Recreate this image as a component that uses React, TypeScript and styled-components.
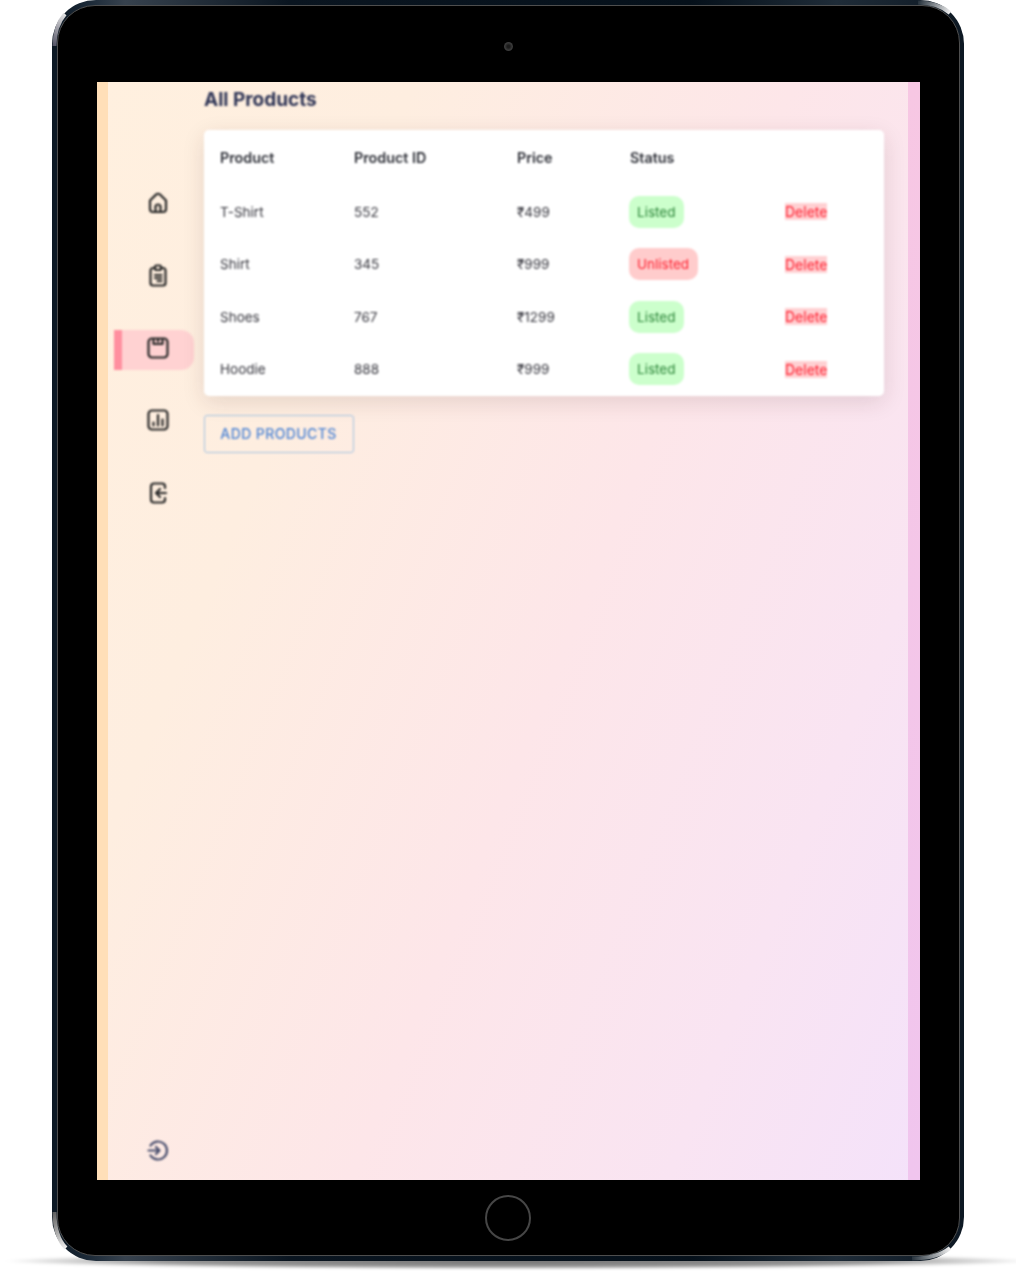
import React from 'react';
import styled, { createGlobalStyle } from 'styled-components';

const GlobalStyle = createGlobalStyle`
  html, body {
    margin: 0;
    padding: 0;
    background: #fff;
    font-family: Inter, "Liberation Sans", sans-serif;
  }
`;

const Page = styled.div`
  position: relative;
  width: 1016px;
  height: 1271px;
  padding-left: 52px;
  box-sizing: border-box;
  overflow: hidden;
`;

const GroundShadow = styled.div`
  position: absolute;
  left: 4px;
  right: -16px;
  top: 1253px;
  height: 16px;
  background: radial-gradient(ellipse 50% 50% at center, rgba(0, 0, 0, 0.55) 0%, rgba(0, 0, 0, 0.42) 70%, rgba(0, 0, 0, 0.12) 92%, rgba(0, 0, 0, 0) 100%);
  filter: blur(1.5px);
`;

const Device = styled.div`
  position: relative;
  width: 912px;
  height: 1261px;
  box-sizing: border-box;
  padding: 5px 4.5px 5.5px 5px;
  border-radius: 44px;
  background: linear-gradient(90deg, #0b1722 0%, #1c2a38 4%, #37424e 8%, #0a1520 26%, #05101a 70%, #1f2c38 86%, #0d1823 100%);
`;

const Glints = styled.svg`
  position: absolute;
  left: 0;
  top: 0;
  pointer-events: none;
`;

const Bezel = styled.div`
  height: 100%;
  box-sizing: border-box;
  display: flex;
  flex-direction: column;
  border: 1.5px solid #4e4e4e;
  border-radius: 38px;
  background: #000;
  padding: 0 38.5px;
`;

const TopBar = styled.div`
  height: 75.5px;
  flex: none;
  display: flex;
  align-items: center;
  justify-content: center;
  padding-top: 6px;
  box-sizing: border-box;
`;

const Camera = styled.div`
  width: 9px;
  height: 9px;
  border-radius: 50%;
  background: radial-gradient(circle, #1a1a1a 20%, #3c3c3c 60%, #2a2a2a 100%);
`;

const BottomBar = styled.div`
  flex: 1;
  display: flex;
  align-items: center;
  justify-content: center;
  padding-top: 1px;
  box-sizing: border-box;
`;

const HomeButton = styled.div`
  width: 46px;
  height: 46px;
  box-sizing: border-box;
  border-radius: 50%;
  border: 2px solid #464646;
`;

const Screen = styled.div`
  width: 823px;
  height: 1098px;
  flex: none;
  display: flex;
  background: linear-gradient(112deg, #fff0df 0%, #feeee0 25%, #fde6e9 55%, #f9e4f2 80%, #f4e2fa 100%);
`;

const Strip = styled.div<{ $side: 'left' | 'right' }>`
  flex: none;
  width: ${props => (props.$side === 'left' ? '11px' : '12px')};
  background: ${props =>
    props.$side === 'left' ? '#ffdfb8' : 'linear-gradient(180deg, #f7c7e3 0%, #f0c5ee 100%)'};
`;

const Sidebar = styled.nav`
  flex: none;
  width: 96px;
  box-sizing: border-box;
  padding: 103px 10px 18px 6px;
  display: flex;
  flex-direction: column;
  gap: 32.5px;
  filter: blur(0.8px);
`;

const NavItem = styled.div<{ $active?: boolean }>`
  height: 40px;
  box-sizing: border-box;
  display: flex;
  justify-content: center;
  padding-top: 6px;
  border-left: 8px solid ${props => (props.$active ? '#ff8f9f' : 'transparent')};
  border-radius: 0 13px 13px 0;
  background: ${props => (props.$active ? '#ffd2d2' : 'transparent')};
`;

const FooterItem = styled.div`
  margin-top: auto;
  padding-left: 8px;
  display: flex;
  justify-content: center;
`;

const Icon = styled.svg<{ $color?: string }>`
  width: 24px;
  height: 24px;
  fill: none;
  stroke: ${props => props.$color || '#262626'};
  stroke-width: 2.2;
  stroke-linecap: round;
  stroke-linejoin: round;
`;

const Main = styled.main`
  flex: 1;
  min-width: 0;
  padding-right: 24px;
  filter: blur(0.8px);
`;

const Title = styled.h1`
  margin: 6px 0 18px;
  padding-left: 0.5px;
  font-size: 19px;
  line-height: 24px;
  font-weight: 700;
  color: #2f3556;
`;

const Card = styled.div`
  width: 680px;
  background: #fff;
  border-radius: 5px;
  box-shadow: 0 6px 22px rgba(60, 30, 30, 0.13);
`;

const Table = styled.table`
  width: 100%;
  table-layout: fixed;
  border-collapse: collapse;
  font-size: 13.5px;
`;

const HeadCell = styled.th<{ $width: number }>`
  width: ${props => props.$width}px;
  height: 56px;
  box-sizing: border-box;
  padding: 0 16px 0 16.5px;
  text-align: left;
  font-size: 14.3px;
  font-weight: 600;
  color: #2c2e36;
`;

const Row = styled.tr`
  height: 52.5px;
`;

const Cell = styled.td`
  padding: 0 16px 0 16.5px;
  color: #33333b;
`;

const StatusPill = styled.span<{ $listed: boolean }>`
  display: inline-block;
  margin-left: -1.5px;
  padding: 7px 8.5px;
  line-height: 18px;
  border-radius: 10px;
  background: ${props => (props.$listed ? '#ccffcc' : '#ffcccc')};
  color: ${props => (props.$listed ? '#2b8538' : '#ff1c2c')};
`;

const DeleteLink = styled.span`
  font-size: 14px;
  background: #ffd0d2;
  color: #ff1c2c;
`;

const AddButton = styled.button`
  display: block;
  margin-top: 19.5px;
  width: 150px;
  height: 38px;
  padding: 0 0 2px;
  border: 1.5px solid #a4c3e2;
  border-radius: 3px;
  background: transparent;
  font-family: inherit;
  font-size: 14px;
  font-weight: 500;
  color: #4a82d4;
  letter-spacing: 0.4px;
`;

const HomeIcon = () => (
  <Icon viewBox="0 0 24 24">
    <path d="M4 9.500 10 3.600a2.800 2.800 0 0 1 4 0l6 5.900V18a3 3 0 0 1-3 3H7a3 3 0 0 1-3-3z" />
    <path d="M9.500 20.500V16a2.500 2.500 0 0 1 5 0v4.500" />
  </Icon>
);

const ClipboardIcon = () => (
  <Icon viewBox="0 0 24 24">
    <path d="M8.500 5H7a2.500 2.500 0 0 0-2.500 2.500V20A2.500 2.500 0 0 0 7 22.500h10a2.500 2.500 0 0 0 2.500-2.500V7.500A2.500 2.500 0 0 0 17 5h-1.500" />
    <rect x="9" y="2.500" width="6" height="4.500" rx="1.500" />
    <path d="M9 12h6.500M9 15h6.500M11.500 18h4" />
  </Icon>
);

const BoxIcon = () => (
  <Icon viewBox="0 0 24 24">
    <rect x="2.500" y="2.500" width="19" height="19" rx="3.500" />
    <path d="M7.500 3v5h9V3" />
    <path d="M12 3v2.500" />
  </Icon>
);

const ChartIcon = () => (
  <Icon viewBox="0 0 24 24">
    <rect x="2.500" y="2.500" width="19" height="19" rx="3.500" />
    <path d="M7.500 14.500v3M12 7v10.500M16.500 11.500v6" />
  </Icon>
);

const LogoutIcon = () => (
  <Icon viewBox="0 0 24 24">
    <path d="M19 7V5.500A3 3 0 0 0 16 2.500H8A3 3 0 0 0 5 5.500v13a3 3 0 0 0 3 3h8a3 3 0 0 0 3-3V17" />
    <path d="M20 12h-9M14 8l-4 4 4 4" />
  </Icon>
);

const LoginIcon = () => (
  <Icon viewBox="0 0 24 24" $color="#454b6b">
    <path d="M4.500 7.500a9 9 0 1 1 0 10" />
    <path d="M2.500 12.500h11M10 9l3.500 3.500L10 16" />
  </Icon>
);

const products = [
  { name: 'T-Shirt', id: 552, price: '₹499', listed: true },
  { name: 'Shirt', id: 345, price: '₹999', listed: false },
  { name: 'Shoes', id: 767, price: '₹1299', listed: true },
  { name: 'Hoodie', id: 888, price: '₹999', listed: true },
];

const navIcons = [HomeIcon, ClipboardIcon, BoxIcon, ChartIcon, LogoutIcon];

const App: React.FC = () => {
  return (
    <Page>
      <GlobalStyle />
      <GroundShadow />
      <Device>
        <Bezel>
          <TopBar>
            <Camera />
          </TopBar>
          <Screen>
            <Strip $side="left" />
            <Sidebar>
              {navIcons.map((NavIcon, i) => (
                <NavItem key={i} $active={i === 2}>
                  <NavIcon />
                </NavItem>
              ))}
              <FooterItem>
                <LoginIcon />
              </FooterItem>
            </Sidebar>
            <Main>
              <Title>All Products</Title>
              <Card>
                <Table>
                  <thead>
                    <tr>
                      <HeadCell $width={134}>Product</HeadCell>
                      <HeadCell $width={163}>Product ID</HeadCell>
                      <HeadCell $width={113}>Price</HeadCell>
                      <HeadCell $width={155}>Status</HeadCell>
                      <HeadCell $width={115} />
                    </tr>
                  </thead>
                  <tbody>
                    {products.map((p) => (
                      <Row key={p.name}>
                        <Cell>{p.name}</Cell>
                        <Cell>{p.id}</Cell>
                        <Cell>{p.price}</Cell>
                        <Cell>
                          <StatusPill $listed={p.listed}>{p.listed ? 'Listed' : 'Unlisted'}</StatusPill>
                        </Cell>
                        <Cell>
                          <DeleteLink>Delete</DeleteLink>
                        </Cell>
                      </Row>
                    ))}
                  </tbody>
                </Table>
              </Card>
              <AddButton>ADD PRODUCTS</AddButton>
            </Main>
            <Strip $side="right" />
          </Screen>
          <BottomBar>
            <HomeButton />
          </BottomBar>
        </Bezel>
        {/* corner highlights of the metal frame */}
        <Glints width="912" height="1261" viewBox="0 0 912 1261" fill="none">
          <defs>
            <linearGradient id="glintTL" x1="0" y1="45" x2="13" y2="13" gradientUnits="userSpaceOnUse">
              <stop offset="0" stopColor="#556" />
              <stop offset="1" stopColor="#e8e8e8" />
            </linearGradient>
            <linearGradient id="glintBL" x1="0" y1="1210" x2="14" y2="1248" gradientUnits="userSpaceOnUse">
              <stop offset="0" stopColor="#555" />
              <stop offset="1" stopColor="#eee" />
            </linearGradient>
            <linearGradient id="glintTR" x1="865" y1="1" x2="898" y2="14" gradientUnits="userSpaceOnUse">
              <stop offset="0" stopColor="#1c2833" />
              <stop offset="1" stopColor="#f0f0f0" />
            </linearGradient>
            <linearGradient id="glintBR" x1="860" y1="1260" x2="898" y2="1248" gradientUnits="userSpaceOnUse">
              <stop offset="0" stopColor="#26323c" />
              <stop offset="1" stopColor="#f0f0f0" />
            </linearGradient>
          </defs>
          <path d="M2.500 46C2.500 32 6 22 13 14" stroke="url(#glintTL)" strokeWidth="4" />
          <path d="M2.500 1212C2.500 1228 6 1240 14 1248" stroke="url(#glintBL)" strokeWidth="4" />
          <path d="M866 2.500C880 2.500 890 6 898 13" stroke="url(#glintTR)" strokeWidth="4" />
          <path d="M860 1258.500C876 1258.500 888 1256 898 1248" stroke="url(#glintBR)" strokeWidth="4" />
        </Glints>
      </Device>
    </Page>
  );
};

export default App;
